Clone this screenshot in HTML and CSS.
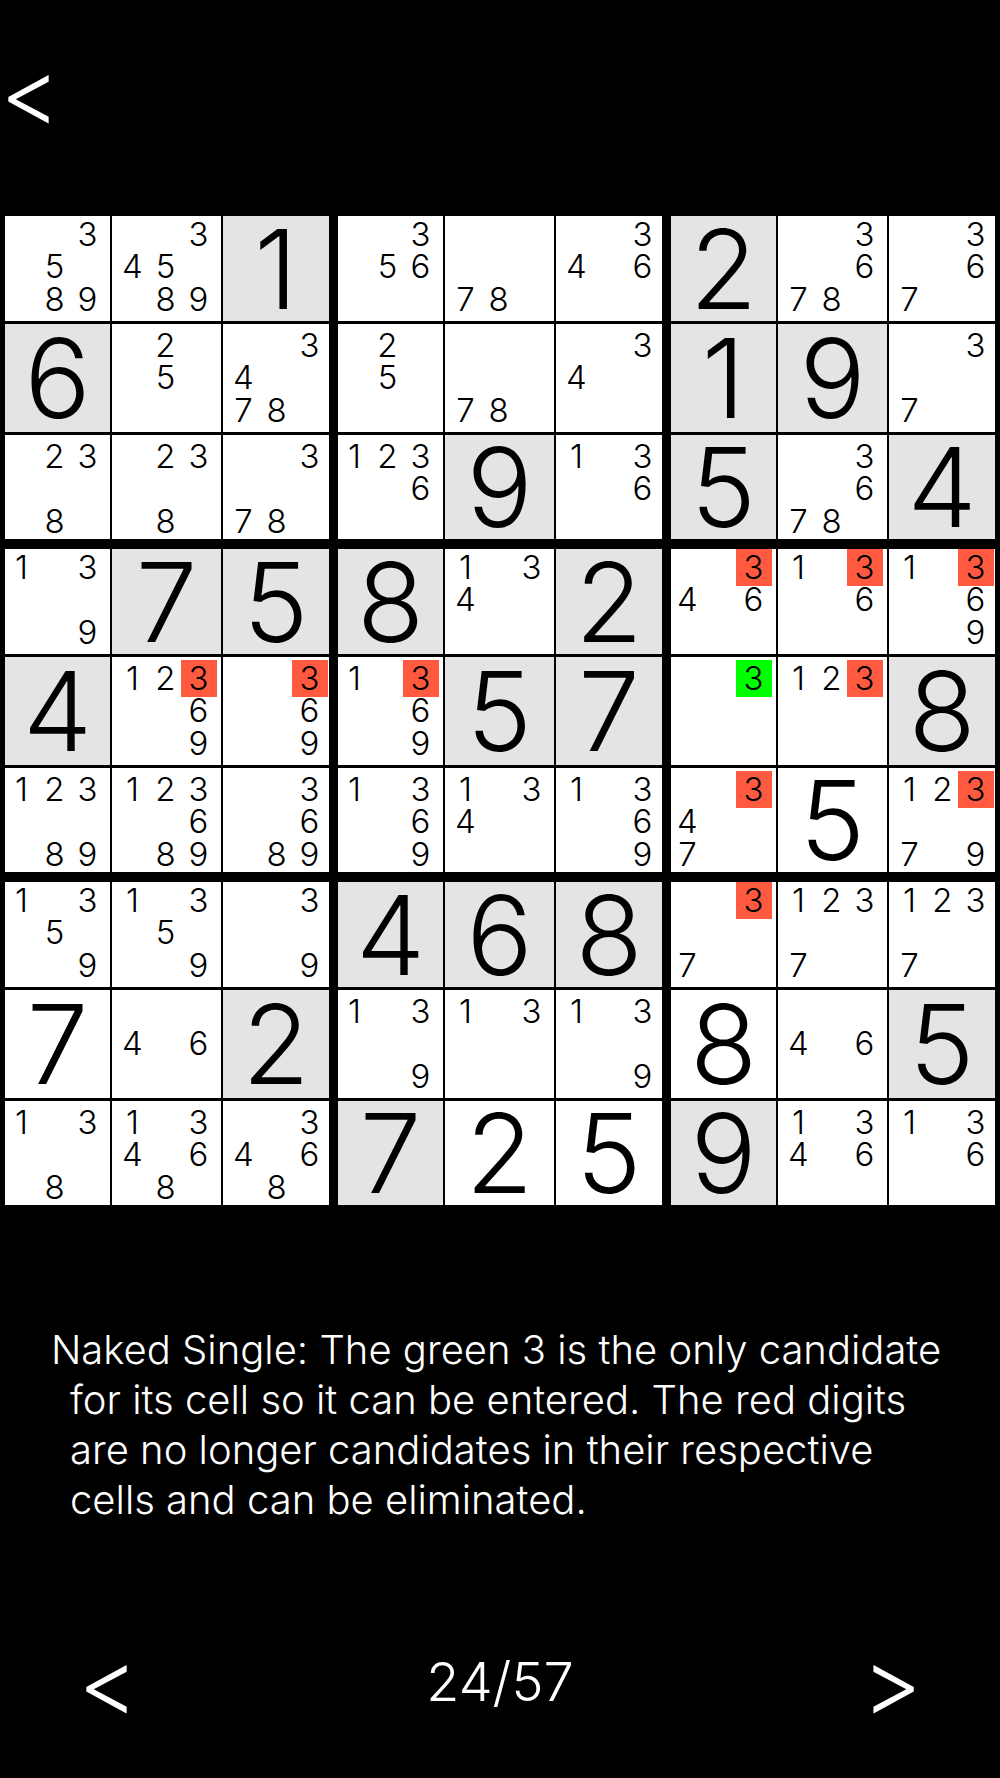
FILE: index.html
```html
<!DOCTYPE html>
<html lang="en">
<head>
    <meta charset="UTF-8">
    <title>Naked Single</title>
    <link rel="stylesheet" href="styles.css">
</head>
<body>
    <div class="top-bar"><span class="back-btn">&lt;</span></div>

    <div class="board">
        <div class="box">
            <div class="cell"><i class="n3">3</i><i class="n5">5</i><i class="n8">8</i><i class="n9">9</i></div>
            <div class="cell"><i class="n3">3</i><i class="n4">4</i><i class="n5">5</i><i class="n8">8</i><i class="n9">9</i></div>
            <div class="cell given">1</div>
            <div class="cell given">6</div>
            <div class="cell"><i class="n2">2</i><i class="n5">5</i></div>
            <div class="cell"><i class="n3">3</i><i class="n4">4</i><i class="n7">7</i><i class="n8">8</i></div>
            <div class="cell"><i class="n2">2</i><i class="n3">3</i><i class="n8">8</i></div>
            <div class="cell"><i class="n2">2</i><i class="n3">3</i><i class="n8">8</i></div>
            <div class="cell"><i class="n3">3</i><i class="n7">7</i><i class="n8">8</i></div>
        </div>
        <div class="box">
            <div class="cell"><i class="n3">3</i><i class="n5">5</i><i class="n6">6</i></div>
            <div class="cell"><i class="n7">7</i><i class="n8">8</i></div>
            <div class="cell"><i class="n3">3</i><i class="n4">4</i><i class="n6">6</i></div>
            <div class="cell"><i class="n2">2</i><i class="n5">5</i></div>
            <div class="cell"><i class="n7">7</i><i class="n8">8</i></div>
            <div class="cell"><i class="n3">3</i><i class="n4">4</i></div>
            <div class="cell"><i class="n1">1</i><i class="n2">2</i><i class="n3">3</i><i class="n6">6</i></div>
            <div class="cell given">9</div>
            <div class="cell"><i class="n1">1</i><i class="n3">3</i><i class="n6">6</i></div>
        </div>
        <div class="box">
            <div class="cell given">2</div>
            <div class="cell"><i class="n3">3</i><i class="n6">6</i><i class="n7">7</i><i class="n8">8</i></div>
            <div class="cell"><i class="n3">3</i><i class="n6">6</i><i class="n7">7</i></div>
            <div class="cell given">1</div>
            <div class="cell given">9</div>
            <div class="cell"><i class="n3">3</i><i class="n7">7</i></div>
            <div class="cell given">5</div>
            <div class="cell"><i class="n3">3</i><i class="n6">6</i><i class="n7">7</i><i class="n8">8</i></div>
            <div class="cell given">4</div>
        </div>

        <div class="box">
            <div class="cell"><i class="n1">1</i><i class="n3">3</i><i class="n9">9</i></div>
            <div class="cell given">7</div>
            <div class="cell given">5</div>
            <div class="cell given">4</div>
            <div class="cell"><i class="n1">1</i><i class="n2">2</i><i class="n3 red">3</i><i class="n6">6</i><i class="n9">9</i></div>
            <div class="cell"><i class="n3 red">3</i><i class="n6">6</i><i class="n9">9</i></div>
            <div class="cell"><i class="n1">1</i><i class="n2">2</i><i class="n3">3</i><i class="n8">8</i><i class="n9">9</i></div>
            <div class="cell"><i class="n1">1</i><i class="n2">2</i><i class="n3">3</i><i class="n6">6</i><i class="n8">8</i><i class="n9">9</i></div>
            <div class="cell"><i class="n3">3</i><i class="n6">6</i><i class="n8">8</i><i class="n9">9</i></div>
        </div>
        <div class="box">
            <div class="cell given">8</div>
            <div class="cell"><i class="n1">1</i><i class="n3">3</i><i class="n4">4</i></div>
            <div class="cell given">2</div>
            <div class="cell"><i class="n1">1</i><i class="n3 red">3</i><i class="n6">6</i><i class="n9">9</i></div>
            <div class="cell given">5</div>
            <div class="cell given">7</div>
            <div class="cell"><i class="n1">1</i><i class="n3">3</i><i class="n6">6</i><i class="n9">9</i></div>
            <div class="cell"><i class="n1">1</i><i class="n3">3</i><i class="n4">4</i></div>
            <div class="cell"><i class="n1">1</i><i class="n3">3</i><i class="n6">6</i><i class="n9">9</i></div>
        </div>
        <div class="box">
            <div class="cell"><i class="n3 red">3</i><i class="n4">4</i><i class="n6">6</i></div>
            <div class="cell"><i class="n1">1</i><i class="n3 red">3</i><i class="n6">6</i></div>
            <div class="cell"><i class="n1">1</i><i class="n3 red">3</i><i class="n6">6</i><i class="n9">9</i></div>
            <div class="cell"><i class="n3 green">3</i></div>
            <div class="cell"><i class="n1">1</i><i class="n2">2</i><i class="n3 red">3</i></div>
            <div class="cell given">8</div>
            <div class="cell"><i class="n3 red">3</i><i class="n4">4</i><i class="n7">7</i></div>
            <div class="cell solved">5</div>
            <div class="cell"><i class="n1">1</i><i class="n2">2</i><i class="n3 red">3</i><i class="n7">7</i><i class="n9">9</i></div>
        </div>

        <div class="box">
            <div class="cell"><i class="n1">1</i><i class="n3">3</i><i class="n5">5</i><i class="n9">9</i></div>
            <div class="cell"><i class="n1">1</i><i class="n3">3</i><i class="n5">5</i><i class="n9">9</i></div>
            <div class="cell"><i class="n3">3</i><i class="n9">9</i></div>
            <div class="cell solved">7</div>
            <div class="cell"><i class="n4">4</i><i class="n6">6</i></div>
            <div class="cell given">2</div>
            <div class="cell"><i class="n1">1</i><i class="n3">3</i><i class="n8">8</i></div>
            <div class="cell"><i class="n1">1</i><i class="n3">3</i><i class="n4">4</i><i class="n6">6</i><i class="n8">8</i></div>
            <div class="cell"><i class="n3">3</i><i class="n4">4</i><i class="n6">6</i><i class="n8">8</i></div>
        </div>
        <div class="box">
            <div class="cell given">4</div>
            <div class="cell given">6</div>
            <div class="cell given">8</div>
            <div class="cell"><i class="n1">1</i><i class="n3">3</i><i class="n9">9</i></div>
            <div class="cell"><i class="n1">1</i><i class="n3">3</i></div>
            <div class="cell"><i class="n1">1</i><i class="n3">3</i><i class="n9">9</i></div>
            <div class="cell given">7</div>
            <div class="cell solved">2</div>
            <div class="cell solved">5</div>
        </div>
        <div class="box">
            <div class="cell"><i class="n3 red">3</i><i class="n7">7</i></div>
            <div class="cell"><i class="n1">1</i><i class="n2">2</i><i class="n3">3</i><i class="n7">7</i></div>
            <div class="cell"><i class="n1">1</i><i class="n2">2</i><i class="n3">3</i><i class="n7">7</i></div>
            <div class="cell solved">8</div>
            <div class="cell"><i class="n4">4</i><i class="n6">6</i></div>
            <div class="cell given">5</div>
            <div class="cell given">9</div>
            <div class="cell"><i class="n1">1</i><i class="n3">3</i><i class="n4">4</i><i class="n6">6</i></div>
            <div class="cell"><i class="n1">1</i><i class="n3">3</i><i class="n6">6</i></div>
        </div>
    </div>

    <p class="hint">Naked Single: The green 3 is the only candidate for its cell so it can be entered. The red digits are no longer candidates in their respective cells and can be eliminated.</p>

    <div class="pager">
        <span class="pager-btn">&lt;</span>
        <span class="pager-count">24/57</span>
        <span class="pager-btn">&gt;</span>
    </div>
</body>
</html>
```

FILE: styles.css
```css
body {
    font-family: Inter, 'Liberation Sans', Arial, sans-serif;
    font-weight: 350;
    margin: 0;
    height: 1778px;
    background-color: #000;
    color: #fff;
    overflow: hidden;
}

.top-bar {
    height: 216px;
    box-sizing: border-box;
    padding: 32px 0 0 0;
}

.back-btn {
    font-size: 92px;
    line-height: 120px;
}

.board {
    display: grid;
    grid-template-columns: repeat(3, 324px);
    grid-auto-rows: 323px;
    gap: 10px 9px;
    padding-left: 5px;
}

.box {
    display: grid;
    grid-template-columns: 105px 109px 106px;
    grid-template-rows: 105px 108px 104px;
    gap: 3px 2px;
}

.cell {
    display: grid;
    grid-template-columns: repeat(3, 33px);
    grid-template-rows: repeat(3, 32.5px);
    box-sizing: border-box;
    padding: 5px 0 0 4px;
    background-color: #fff;
    color: #000;
}

.box .cell:nth-child(3n+1) {
    padding-left: 0;
}

.box .cell:nth-child(-n+3) {
    padding-top: 2px;
}

.box .cell.given, .box .cell.solved {
    display: flex;
    align-items: center;
    justify-content: center;
    padding: 0;
    font-size: 110px;
    line-height: 100px;
}

.box .cell.given {
    background-color: #e4e4e4;
}

.cell i {
    display: flex;
    align-items: center;
    justify-content: center;
    font-style: normal;
    font-size: 33px;
    line-height: 1;
}

.n1 { grid-area: 1 / 1; }
.n2 { grid-area: 1 / 2; }
.n3 { grid-area: 1 / 3; }
.n4 { grid-area: 2 / 1; }
.n5 { grid-area: 2 / 2; }
.n6 { grid-area: 2 / 3; }
.n7 { grid-area: 3 / 1; }
.n8 { grid-area: 3 / 2; }
.n9 { grid-area: 3 / 3; }

.cell .red, .cell .green {
    margin: -2px -1.5px;
}

.cell .red {
    background-color: #ff5a40;
}

.cell .green {
    background-color: #00ff00;
}

.hint {
    margin: 120px 50px 0 70px;
    text-indent: -19px;
    font-size: 40px;
    line-height: 50px;
}

.pager {
    display: flex;
    justify-content: space-between;
    align-items: center;
    margin-top: 112px;
    padding: 0 78px;
}

.pager-btn {
    font-size: 92px;
    line-height: 90px;
}

.pager-count {
    font-size: 54px;
    margin-top: -2px;
}
```
